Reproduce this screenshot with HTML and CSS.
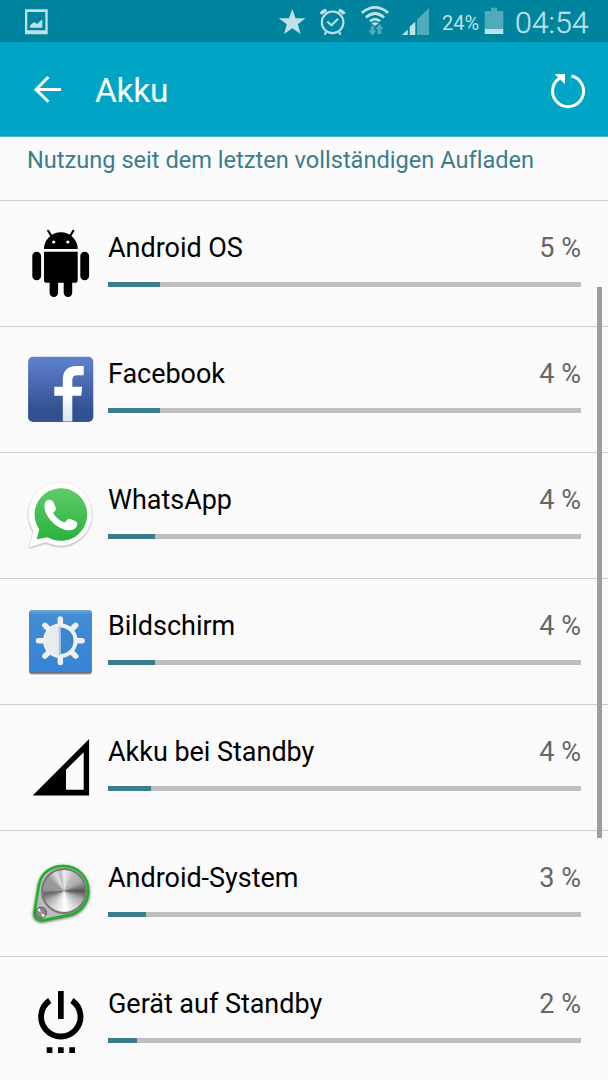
FILE: index.html
```html
<!DOCTYPE html>
<html lang="de">
<head>
<meta charset="utf-8">
<title>Akku</title>
<link rel="stylesheet" href="styles.css">
</head>
<body>
<div class="screen">
  <header class="status">
    <svg class="status-left" width="60" height="42" viewBox="0 0 60 42"><path class="pale" fill-rule="evenodd" d="M25 9.300H47.700V34.300H25ZM27.300 12V30.300H45.300V12ZM30 27.700V25.500L34 22L37 24L42.300 19.300V27.700Z"/></svg>
    <svg class="status-icons" width="170" height="42" viewBox="270 0 170 42">
      <path class="pale" d="M292.300 9L295.600 18.200H305.500L297.800 24.200L300.700 34L292.300 28.300L284 34L286.800 24.200L278.800 18.200H289Z"/>
      <g class="pale-line" stroke-width="2.100"><circle cx="332.600" cy="22.300" r="10.800"/><path d="M327.300 21.500L331.500 25.200L338 18.800"/><path stroke-width="3.400" d="M321 14C322 12.200 323.800 10.900 326.500 10.400M338.700 10.400C341.400 10.900 343.200 12.200 344.200 14"/><path d="M326 32L324.800 34.700M339.200 32L340.400 34.700"/></g>
      <g class="pale-line" stroke-width="2.700"><path d="M361.900 12.900Q375 2 388.100 12.900M365.900 17.500Q375 9.500 384.100 17.500M369.900 21.300Q375 17 380.100 21.300"/></g>
      <path class="pale" d="M371.300 23.500Q375 21 378.700 23.500L375 25.700Z"/>
      <path class="dim" d="M370.700 25.700H374.300V30.500H376.500L372.500 35.800L368.300 30.500H370.700ZM377.500 34V29H375.500L379.500 23.700L383.400 29H381.300V34Z"/>
      <path class="pale" d="M402 35L407.700 29.400V35ZM409.700 35V26.800L415.300 21.700V35Z"/><path class="dim" d="M417 35V19.500L429 8V35Z"/>
    </svg>
    <span class="percent">24%</span>
    <svg class="battery" width="20" height="42" viewBox="484 0 20 42"><path class="dim" d="M484.700 11H491V7.700H497.300V11H503.300V29H484.700Z"/><path class="pale" d="M484.700 29H503.300V34H484.700Z"/></svg>
    <span class="clock">04:54</span>
  </header>
  <nav class="bar">
    <svg class="back" width="28" height="28" viewBox="34 76 28 28"><path d="M48.400 77L36 89.500L48.400 101.700M36 89.500H61"/></svg>
    <h1 class="title">Akku</h1>
    <svg class="refresh" width="36" height="36" viewBox="550 73 36 36"><path d="M571.500 76A15.500 15.500 0 1 1 559.500 78.200"/><path class="tip" d="M554.700 74H565V84.300Z"/></svg>
  </nav>
  <main class="content">
    <h2 class="heading">Nutzung seit dem letzten vollständigen Aufladen</h2>
    <ul class="list">
      <li class="row">
        <svg class="icon" viewBox="24 221 76 90"><path d="M44 249A16.800 16.700 0 0 1 77.700 249ZM44 251.700H77.700V280.200Q77.700 282.700 75.200 282.700H46.500Q44 282.700 44 280.200Z"/><rect x="32.300" y="251.700" width="8.800" height="28.500" rx="4.400"/><rect x="80.300" y="251.700" width="8.800" height="28.500" rx="4.400"/><rect x="49.600" y="272" width="8.500" height="25" rx="4.200"/><rect x="63.700" y="272" width="8.500" height="25" rx="4.200"/><path d="M48.200 230.800L52 237M73.300 230.800L69.500 237" stroke="#000" stroke-width="2.200" stroke-linecap="round"/><circle cx="53.700" cy="242" r="1.600" fill="#fff"/><circle cx="67.800" cy="242" r="1.600" fill="#fff"/></svg>
        <div class="info"><span class="name">Android OS</span><span class="value">5 %</span><div class="track"><div class="fill" style="width:52.300px"></div></div></div>
      </li>
      <li class="row">
        <svg class="icon" viewBox="24 347 76 90"><defs><linearGradient id="fb" x2="0" y2="1"><stop stop-color="#5f82ce"/><stop offset=".5" stop-color="#4464aa"/><stop offset=".85" stop-color="#2f4f8d"/><stop offset="1" stop-color="#355491"/></linearGradient><linearGradient id="fw" x2="0" y2="1"><stop offset=".5" stop-color="#fff"/><stop offset="1" stop-color="#dce4f0"/></linearGradient></defs><rect x="28.100" y="356.800" width="65.200" height="65.200" rx="5" fill="url(#fb)"/><path fill="url(#fw)" d="M62.800 421.500V395.700H54.300V386.700H62.800V380C62.800 371 67.500 366 76 366H83.700V375.300H78C73.800 375.300 72.300 377 72.300 381V386.700H82.200L81.200 395.700H72.300V421.500Z"/></svg>
        <div class="info"><span class="name">Facebook</span><span class="value">4 %</span><div class="track"><div class="fill" style="width:52.300px"></div></div></div>
      </li>
      <li class="row">
        <svg class="icon" viewBox="24 473 76 90"><defs><linearGradient id="wa" x2="0" y2="1"><stop stop-color="#60cc69"/><stop offset="1" stop-color="#28b23c"/></linearGradient></defs><path class="bubble" d="M29.200 547.300L33.500 531A31.500 31.500 0 1 1 46 542.300Z"/><path fill="url(#wa)" d="M36.700 539.300L39.300 529.500A26.300 26.300 0 1 1 47.800 537.300Z"/><path fill="#fff" d="M46.200 501C47.500 499.400 50.500 499.200 52 500.500C53.800 502.300 55 505.300 56 508.500C56.300 510.500 53.800 511.500 53.200 513C54.500 516 60 521.300 64.500 522.500C66.300 521.800 67 518.700 69.200 518.700C71.500 519 75.800 521 77.200 522.600C77.700 525.200 76 528.300 73.500 529.500C69.500 531.200 64.500 530 60 527.700C53.500 524.300 48.200 518.500 45.500 512C43.900 507.500 44 503.200 46.200 501Z"/></svg>
        <div class="info"><span class="name">WhatsApp</span><span class="value">4 %</span><div class="track"><div class="fill" style="width:47.300px"></div></div></div>
      </li>
      <li class="row">
        <svg class="icon" viewBox="24 599 76 90"><defs><linearGradient id="br" x2="0" y2="1"><stop stop-color="#72a5cf"/><stop offset=".08" stop-color="#428cd4"/><stop offset="1" stop-color="#3784d4"/></linearGradient></defs><rect class="tile-edge" x="29.200" y="611" width="62.500" height="62.500" rx="2.500"/><rect x="29.200" y="610" width="62.500" height="62" rx="2.500" fill="url(#br)"/><path class="rays" d="M60.300 619V626M60.300 655.500V662.500M38.500 640.700H45.500M75.100 640.700H82.100M44.900 625.300L49.300 629.700M71.300 651.700L75.700 656.100M75.700 625.300L71.300 629.700M49.300 651.700L44.900 656.100"/><circle cx="60.300" cy="640.700" r="15.300" fill="#3d85cc" stroke="#eef0f1" stroke-width="4"/><path fill="#e9eced" d="M60.300 625.500A15.200 15.200 0 0 0 60.300 655.900Z"/><path fill="#a9cae8" d="M58.700 626.500H60.800V655H58.700Z"/></svg>
        <div class="info"><span class="name">Bildschirm</span><span class="value">4 %</span><div class="track"><div class="fill" style="width:47.300px"></div></div></div>
      </li>
      <li class="row">
        <svg class="icon" viewBox="24 725 76 90"><path fill-rule="evenodd" d="M32.700 795.500L89.100 739V795.500ZM66 789.700H83.700V752.300L66 769.700Z"/></svg>
        <div class="info"><span class="name">Akku bei Standby</span><span class="value">4 %</span><div class="track"><div class="fill" style="width:43px"></div></div></div>
      </li>
      <li class="row">
        <svg class="icon" viewBox="24 851 76 90"><path class="plate" d="M39 885C41 873 51 866 63.500 866C78 866 88.300 877 88.300 891C88.300 904 79 913 68.500 915L43 920.200C37.500 921.200 33.500 917 34.500 912Z"/><foreignObject x="40.500" y="867.500" width="46" height="46"><div class="dial"></div></foreignObject><circle cx="41" cy="912.700" r="5.500" fill="#888" stroke="#555"/><path d="M37 910L41 912.700L39.500 908ZM41 912.700L45.500 915.500L42.500 917.500Z" fill="#eee"/></svg>
        <div class="info"><span class="name">Android-System</span><span class="value">3 %</span><div class="track"><div class="fill" style="width:38.300px"></div></div></div>
      </li>
      <li class="row">
        <svg class="icon" viewBox="24 977 76 90"><path d="M49.700 1000.500A19.700 19.700 0 1 0 71.900 1000.500" fill="none" stroke="#000" stroke-width="5.800"/><path d="M58 991H63.700V1019H58ZM46.700 1047.300H52.400V1053H46.700ZM58 1047.300H63.700V1053H58ZM69.300 1047.300H75V1053H69.300Z"/></svg>
        <div class="info"><span class="name">Gerät auf Standby</span><span class="value">2 %</span><div class="track"><div class="fill" style="width:28.700px"></div></div></div>
      </li>
    </ul>
  </main>
  <div class="scrollbar"></div>
</div>
</body>
</html>
```
FILE: styles.css
```css
* { box-sizing: border-box; }
body { margin: 0; font-family: Roboto, "Noto Sans", sans-serif; background: #fafafa; }
.screen { position: relative; width: 608px; height: 1080px; overflow: hidden; }
svg { display: block; flex: none; }
.status { display: flex; height: 42px; background: #00839d; color: #bfe0e7; }
.status-left { margin-right: 210px; }
.pale { fill: #bfe0e7; }
.pale-line { fill: none; stroke: #bfe0e7; }
.dim { fill: #51a9bc; }
.percent { width: 44px; padding-left: 2px; font-size: 20px; line-height: 46px; white-space: nowrap; }
.clock { margin-left: 11px; font-size: 30.300px; line-height: 46px; font-weight: 300; white-space: nowrap; -webkit-text-stroke: .3px #bfe0e7; }
.bar { display: flex; align-items: center; height: 95px; padding: 0 22px 0 34px; background: #00a5c5; border-bottom: 1px solid #4fb9cf; }
.back, .refresh { fill: none; stroke: #fff; stroke-width: 3; }
.back { margin-top: 2px; }
.refresh { margin-left: auto; margin-top: 3px; }
.refresh .tip { fill: #fff; stroke: none; }
.title { margin: 3px 0 0 33px; font-size: 33.500px; font-weight: 400; letter-spacing: -.3px; color: #fff; }
.heading { height: 64px; margin: 0; padding: 8px 0 0 27px; border-bottom: 1px solid #cdcdcd; color: #3b7d8c; font-size: 23.600px; line-height: 30px; font-weight: 400; white-space: nowrap; font-variant-ligatures: none; }
.list { margin: 0; padding: 0; list-style: none; }
.row { display: flex; height: 126px; padding: 20px 27px 0 24px; border-bottom: 1px solid #cdcdcd; }
.icon { width: 76px; height: 90px; overflow: visible; }
.info { flex: 1; display: grid; grid-template-columns: 1fr auto; align-content: start; margin-left: 8px; padding-top: 9px; }
.name, .value { height: 36px; font-size: 27px; line-height: 36px; white-space: nowrap; color: #000; }
.name { letter-spacing: -.03px; }
.value { color: #666; }
.track { grid-column: 1 / 3; height: 5.500px; margin-top: 15.700px; background: #bebebe; }
.fill { height: 100%; background: #3b7d8c; }
.bubble { fill: #fff; filter: drop-shadow(0 1px 1px #aaa); }
.tile-edge { fill: #65717c; filter: drop-shadow(0 1px .5px #aaa); }
.rays { fill: none; stroke: #eef0f1; stroke-width: 5.500; stroke-linecap: round; }
.plate { fill: #bbb; stroke: #18b61b; stroke-width: 2.500; filter: drop-shadow(0 1px 1.500px #555); }
.dial { width: 46px; height: 46px; border: 2px solid #777; border-radius: 50%; background: conic-gradient(#eee 0deg, #bbb 30deg, #aaa 60deg, #555 90deg, #aaa 115deg, #ddd 150deg, #fff 175deg, #ddd 210deg, #aaa 240deg, #666 262deg, #999 275deg, #999 310deg, #ddd 335deg, #bbb 350deg, #eee 360deg); }
.scrollbar { position: absolute; left: 597px; top: 287px; width: 5px; height: 551px; background: #9c9d9f; }
```
